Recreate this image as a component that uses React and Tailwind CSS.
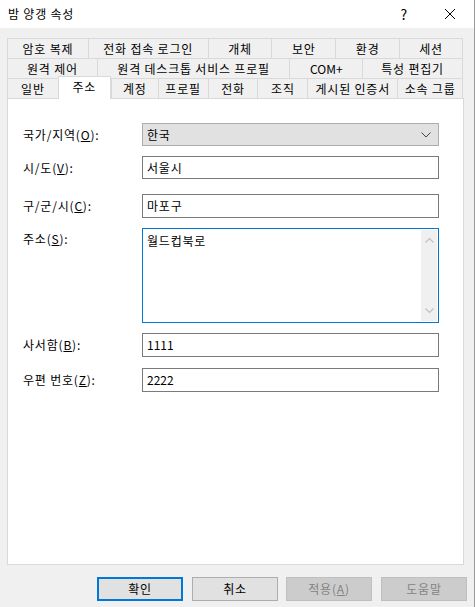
import React from 'react';

const font = { fontFamily: '"Noto Sans CJK KR", "Noto Sans", sans-serif' };

const Tab = ({ w, children }) => (
    <div className={`${w} h-[20px] border-t border-l border-[#d9d9d9] bg-[#f0f0f0] flex items-center justify-center leading-none`}>
        {children}
    </div>
);

const Field = ({ label, mt, h = 'h-[24px]', children }) => (
    <div className={`flex items-center ${mt}`}>
        <div className="w-[119px] shrink-0">{label}</div>
        <div className={`w-[297px] ${h} border border-[#7a7a7a] bg-white flex items-center pl-[4px]`}>
            {children}
        </div>
    </div>
);

const Btn = ({ children, variant, ml }) => {
    const styles = {
        primary: 'border-2 border-[#0078d7] bg-[#e1e1e1] text-black',
        normal: 'border border-[#adadad] bg-[#e1e1e1] text-black',
        disabled: 'border border-[#bfbfbf] bg-[#cccccc] text-[#838383]',
    };
    return (
        <div className={`${ml} w-[86px] h-[24px] flex items-center justify-center ${styles[variant]}`}>
            {children}
        </div>
    );
};

export default function App() {
    return (
        <div className="w-[475px] h-[607px] bg-[#f0f0f0] text-[12px] tracking-[0.8px] text-black overflow-hidden border-r border-[#9a9a9a]" style={font}>
            {/* title bar */}
            <div className="h-[28px] bg-white flex items-center pl-[8px]">
                <span className="flex-1">밤 양갱 속성</span>
                <span className="text-[14px] mr-[36px]">?</span>
                <svg width="12" height="12" viewBox="0 0 12 12" className="mr-[18px]">
                    <path d="M1 1 L11 11 M11 1 L1 11" stroke="#000" strokeWidth="1" />
                </svg>
            </div>

            <div className="pt-[10px] pl-[7px]">
                {/* tab rows */}
                <div className="flex w-[456px] border-r border-[#d9d9d9]">
                    <Tab w="w-[81px]">암호 복제</Tab>
                    <Tab w="w-[120px]">전화 접속 로그인</Tab>
                    <Tab w="w-[64px]">개체</Tab>
                    <Tab w="w-[64px]">보안</Tab>
                    <Tab w="w-[64px]">환경</Tab>
                    <Tab w="w-[63px]">세션</Tab>
                </div>
                <div className="flex w-[456px] border-r border-[#d9d9d9]">
                    <Tab w="w-[90px]">원격 제어</Tab>
                    <Tab w="w-[193px]">원격 데스크톱 서비스 프로필</Tab>
                    <Tab w="w-[73px]"><span className="tracking-normal">COM+</span></Tab>
                    <Tab w="w-[100px]">특성 편집기</Tab>
                </div>
                <div className="flex w-[456px] h-[20px] items-start border-r border-[#d9d9d9]">
                    <Tab w="w-[51px]">일반</Tab>
                    <div className="relative z-10 -mt-[2px] w-[53px] h-[23px] bg-white border-t border-l border-r border-[#d9d9d9]">
                        <div className="h-[19px] flex items-center justify-center leading-none">주소</div>
                    </div>
                    <Tab w="w-[47px]">계정</Tab>
                    <Tab w="w-[50px]">프로필</Tab>
                    <Tab w="w-[50px]">전화</Tab>
                    <Tab w="w-[50px]">조직</Tab>
                    <Tab w="w-[90px]">게시된 인증서</Tab>
                    <Tab w="w-[65px]">소속 그룹</Tab>
                </div>

                {/* panel */}
                <div className="w-[457px] h-[467px] bg-white border border-[#d9d9d9] pl-[15px] pt-[24px]">
                    <div className="flex items-center">
                        <div className="w-[119px] shrink-0">국가/지역(<u>O</u>):</div>
                        <div className="w-[297px] h-[23px] border border-[#adadad] bg-[#e1e1e1] flex items-center pl-[4px] pr-[7px]">
                            <span className="flex-1">한국</span>
                            <svg width="10" height="6" viewBox="0 0 10 6">
                                <path d="M0.5 0.5 L5 5 L9.5 0.5" stroke="#444" strokeWidth="1" fill="none" />
                            </svg>
                        </div>
                    </div>
                    <Field label={<>시/도(<u>V</u>):</>} mt="mt-[10px]" h="h-[23px]">서울시</Field>
                    <Field label={<>구/군/시(<u>C</u>):</>} mt="mt-[15px]">마포구</Field>

                    <div className="flex items-start mt-[10px]">
                        <div className="w-[119px] shrink-0 pt-[2px]">주소(<u>S</u>):</div>
                        <div className="w-[297px] h-[95px] border border-[#0078d7] bg-white flex">
                            <div className="flex-1 pl-[4px] pt-[3px]">월드컵북로</div>
                            <div className="w-[16px] my-[1px] mr-[1px] bg-[#f0f0f0] flex flex-col items-center justify-between py-[8px]">
                                <svg width="9" height="5" viewBox="0 0 9 5">
                                    <path d="M0.5 4.5 L4.5 0.5 L8.5 4.5" stroke="#c2c2c2" strokeWidth="1.2" fill="none" />
                                </svg>
                                <svg width="9" height="5" viewBox="0 0 9 5">
                                    <path d="M0.5 0.5 L4.5 4.5 L8.5 0.5" stroke="#c2c2c2" strokeWidth="1.2" fill="none" />
                                </svg>
                            </div>
                        </div>
                    </div>

                    <Field label={<>사서함(<u>B</u>):</>} mt="mt-[10px]"><span className="tracking-normal">1111</span></Field>
                    <Field label={<>우편 번호(<u>Z</u>):</>} mt="mt-[11px]"><span className="tracking-normal">2222</span></Field>
                </div>

                {/* buttons */}
                <div className="flex mt-[12px] pl-[90px]">
                    <Btn variant="primary" ml="ml-0">확인</Btn>
                    <Btn variant="normal" ml="ml-[9px]">취소</Btn>
                    <Btn variant="disabled" ml="ml-[8px]">적용(<u>A</u>)</Btn>
                    <Btn variant="disabled" ml="ml-[9px]">도움말</Btn>
                </div>
            </div>
        </div>
    );
}
